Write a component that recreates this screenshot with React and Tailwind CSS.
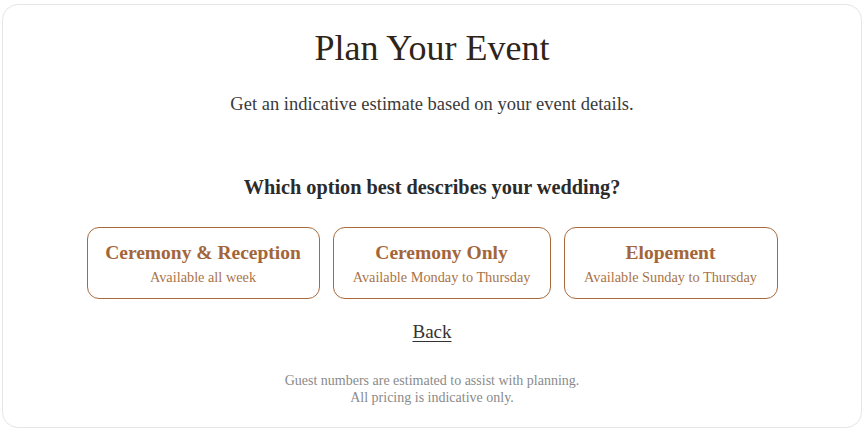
import React from 'react';

const options = [
    { title: 'Ceremony & Reception', note: 'Available all week', width: 'w-[233px]' },
    { title: 'Ceremony Only', note: 'Available Monday to Thursday', width: 'w-[218px]' },
    { title: 'Elopement', note: 'Available Sunday to Thursday', width: 'w-[214px]' },
];

const App = () => {
    return (
        <div className="min-h-screen bg-white pl-[2px] pr-[3px] pt-[4px] font-['Liberation_Serif',serif]">
            <div className="h-[424px] rounded-2xl border border-[#e6e6e6] bg-white flex flex-col items-center">
                {/* Header */}
                <h1 className="mt-[21px] text-[36px] leading-[44px] text-[#2f2419]">Plan Your Event</h1>
                <p className="mt-[22px] text-[18.5px] leading-[24px] text-[#3a3a3a]">
                    Get an indicative estimate based on your event details.
                </p>

                {/* Question */}
                <h2 className="mt-[57px] text-[20.3px] leading-[28px] font-bold text-[#2b2b2b]">
                    Which option best describes your wedding?
                </h2>

                <div className="mt-[26px] flex gap-[13px]">
                    {options.map((o) => (
                        <button
                            key={o.title}
                            className={`${o.width} h-[72px] rounded-xl border border-[#a86a3c] bg-white flex flex-col items-center pt-[13px]`}
                        >
                            <span className="text-[19.5px] leading-[24px] font-bold text-[#a3653a]">{o.title}</span>
                            <span className="mt-[2px] text-[14.3px] leading-[20px] text-[#a97449]">{o.note}</span>
                        </button>
                    ))}
                </div>

                <a href="#" className="mt-[21px] text-[19px] leading-[24px] text-[#333333] underline underline-offset-[3px] decoration-1">
                    Back
                </a>

                {/* Footer note */}
                <div className="mt-[28px] text-center text-[14px] leading-[17px] text-[#8a8a8a]">
                    <p>Guest numbers are estimated to assist with planning.</p>
                    <p>All pricing is indicative only.</p>
                </div>
            </div>
        </div>
    );
};

export default App;
